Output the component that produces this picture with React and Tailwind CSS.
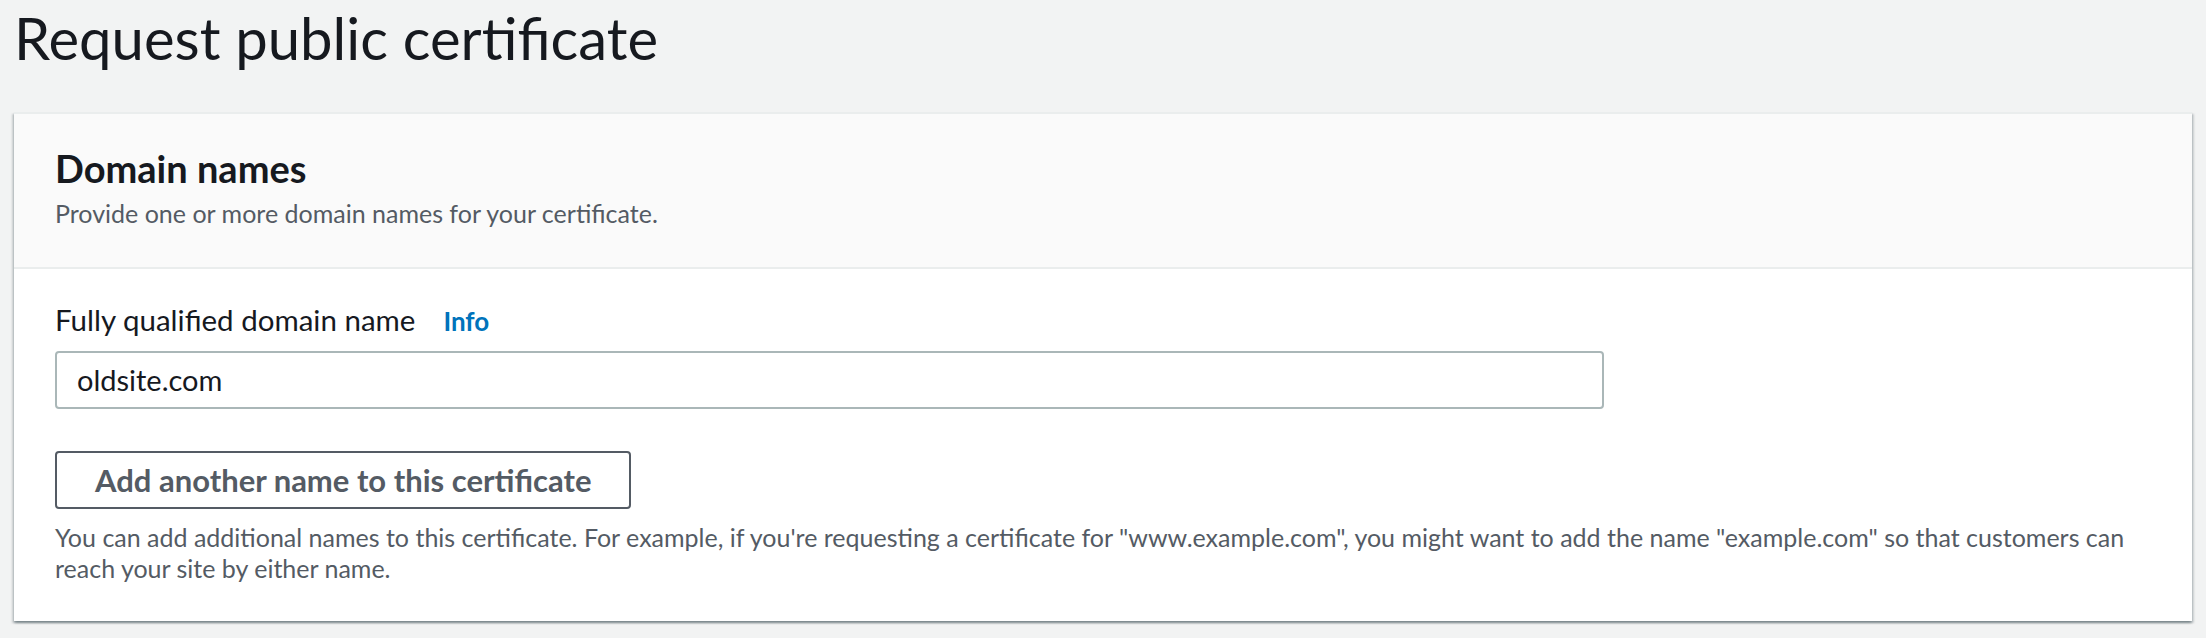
export default function App() {
  return (
    <div className="min-h-screen bg-[#f2f3f3] px-[14px] pt-[9px] pb-[16px] text-[#16191f] font-['Lato',sans-serif]">
      <h1 className="text-[58px] leading-none font-normal">Request public certificate</h1>

      <section className="mt-[45px] bg-white border-t-2 border-[#eaeded] shadow-[0_2px_2px_0_rgba(0,28,36,0.3),2px_2px_2px_0_rgba(0,28,36,0.15),-2px_2px_2px_0_rgba(0,28,36,0.15)]">
        {/* Header */}
        <div className="bg-[#fafafa] border-b-2 border-[#eaeded] px-[41px] pt-[32px] pb-[34px]">
          <h2 className="text-[38px] leading-[44px] font-bold">Domain names</h2>
          <p className="mt-[3px] text-[25px] leading-[40px] text-[#545b64]">
            Provide one or more domain names for your certificate.
          </p>
        </div>

        {/* Body */}
        <div className="px-[41px] pt-[31px] pb-[37px]">
          <div className="flex items-baseline gap-[28px] leading-[40px]">
            <label htmlFor="fqdn" className="text-[29.5px]">Fully qualified domain name</label>
            <a href="#" className="text-[26px] font-bold text-[#0073bb]">Info</a>
          </div>

          <div className="mt-[10px] flex h-[58px] w-[1549px] items-center rounded-[4px] border-2 border-[#aab7b8] bg-white px-[20px]">
            <input
              id="fqdn"
              defaultValue="oldsite.com"
              className="w-full bg-transparent text-[29px] leading-[34px] text-[#16191f] outline-none"
            />
          </div>

          <button className="mt-[42px] flex h-[58px] items-center rounded-[4px] border-2 border-[#545b64] bg-white px-[38px] text-[31px] font-bold leading-[34px] text-[#545b64]">
            Add another name to this certificate
          </button>

          <p className="mt-[13px] text-[25px] leading-[31px] text-[#545b64]">
            You can add additional names to this certificate. For example, if you're requesting a certificate for
            "www.example.com", you might want to add the name "example.com" so that customers can reach your site by
            either name.
          </p>
        </div>
      </section>
    </div>
  );
}
